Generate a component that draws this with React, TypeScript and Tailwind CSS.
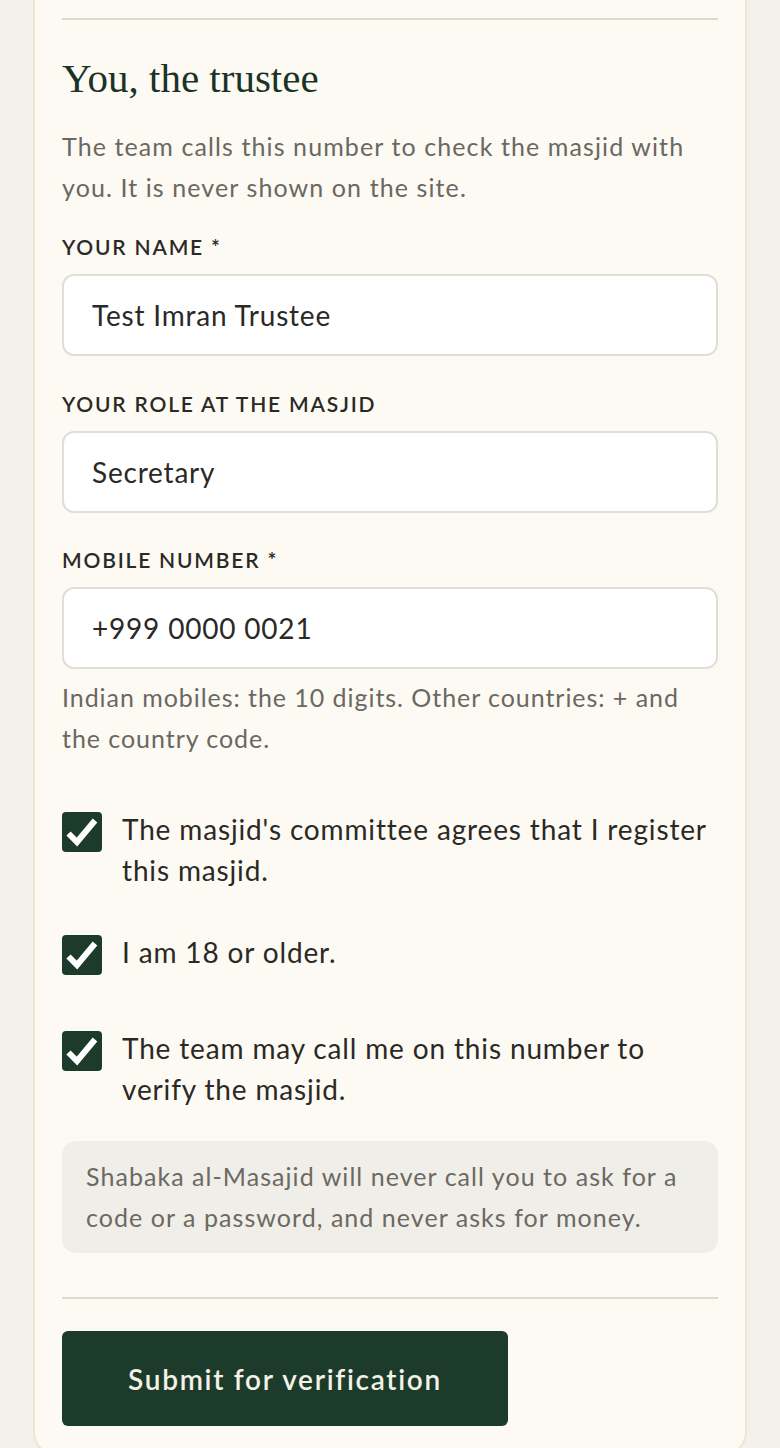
import React, {useState} from "react";

function Check() {
    return (
        <span className="mt-[3px] flex h-[40px] w-[40px] shrink-0 items-center justify-center rounded-[4px] bg-[#1c3b2a]">
            <svg width="40" height="40" viewBox="0 0 40 40" fill="none">
                <polyline points="6.5,21.5 15,30 33,8.5" stroke="#ffffff" strokeWidth="6" strokeLinecap="butt" strokeLinejoin="miter"/>
            </svg>
        </span>
    );
}

function Field({label, value, className}: {label: string; value: string; className?: string}) {
    const [text, setText] = useState(value);
    return (
        <div className={className}>
            <label className="block text-[21px] leading-[24px] font-semibold uppercase tracking-[1.8px] text-[#2b2926]">
                {label}
            </label>
            <input
                value={text}
                onChange={e => setText(e.target.value)}
                className="mt-[15px] block h-[82px] w-full rounded-[12px] border-2 border-[#e1ded8] bg-white px-[28px] text-[28px] tracking-[0.8px] text-[#2b2926] outline-none"
            />
        </div>
    );
}

function Agree({children, className}: {children: React.ReactNode; className?: string}) {
    return (
        <label className={"flex items-start gap-[20px] " + (className ?? "")}>
            <Check/>
            <span className="text-[28px] leading-[41px] tracking-[0.85px] text-[#2b2926]">{children}</span>
        </label>
    );
}

export default function App() {
    return (
        <div className="h-[1448px] overflow-hidden bg-[#f4f1eb] px-[33px] font-['Lato',sans-serif]">
            <div className="rounded-b-[24px] border-2 border-t-0 border-[#eee5d3] bg-[#fcfaf3] px-[27px] pt-[18px] pb-[28px]">
                <hr className="border-0 border-t-2 border-[#dcd9d1]"/>

                <h2 className="mt-[34px] font-['Liberation_Serif',serif] text-[41px] leading-[48px] text-[#1a3326]">
                    You, the trustee
                </h2>
                <p className="mt-[24px] text-[25px] leading-[41px] tracking-[1.1px] text-[#6b6761]">
                    The team calls this number to check the masjid with you. It is never shown on the site.
                </p>

                <Field className="mt-[27px]" label="Your name *" value="Test Imran Trustee"/>
                <Field className="mt-[36px]" label="Your role at the masjid" value="Secretary"/>
                <Field className="mt-[35px]" label="Mobile number *" value="+999 0000 0021"/>

                <p className="mt-[8px] text-[25px] leading-[41px] tracking-[0.95px] text-[#6b6761]">
                    Indian mobiles: the 10 digits. Other countries: + and the country code.
                </p>

                <Agree className="mt-[50px]">The masjid's committee agrees that I register this masjid.</Agree>
                <Agree className="mt-[41px]">I am 18 or older.</Agree>
                <Agree className="mt-[53px]">The team may call me on this number to verify the masjid.</Agree>

                <div className="mt-[31px] rounded-[14px] bg-[#efeee9] px-[24px] py-[15px] text-[25px] leading-[41px] tracking-[1.05px] text-[#6d6861]">
                    Shabaka al-Masajid will never call you to ask for a code or a password, and never asks for money.
                </div>

                <hr className="mt-[44px] border-0 border-t-2 border-[#dcd9d1]"/>

                <button className="mt-[32px] h-[95px] w-[446px] rounded-[6px] bg-[#1d3b2b] text-[28px] font-semibold tracking-[1.7px] text-[#f4f1e6]">
                    Submit for verification
                </button>
            </div>
        </div>
    );
}
